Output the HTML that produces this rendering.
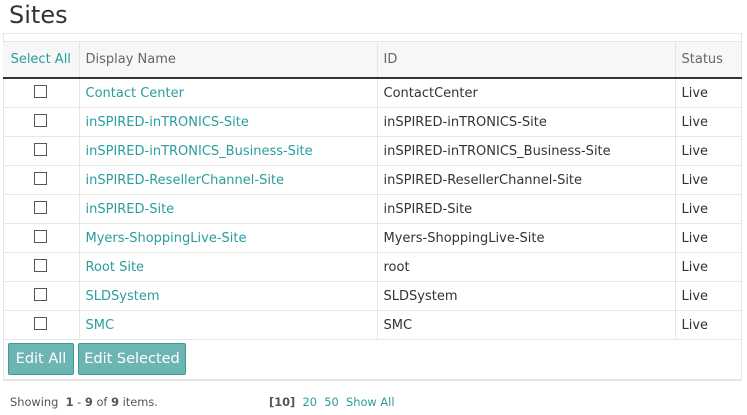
<!DOCTYPE html>
<html><head><style>
body{margin:0;width:747px;height:415px;background:#fff;font-family:"DejaVu Sans",Verdana,sans-serif;font-size:13px;color:#333;position:relative;overflow:hidden}
h1{position:absolute;left:9px;top:1px;margin:0;font-weight:normal;font-size:24px;color:#333}
.box{position:absolute;left:3px;top:33px;width:737px;height:345px;border:1px solid #e6e6e6;border-bottom:2px solid #e6e6e6}
table{position:absolute;left:3px;top:41px;border-collapse:collapse;width:739px;table-layout:fixed}
th{background:#f7f7f7;font-weight:normal;color:#666;text-align:left;height:35px;border-bottom:2px solid #333;border-right:1px solid #e6e6e6;border-top:1px solid #e6e6e6;padding:0 6px}
td{height:28px;border-bottom:1px solid #e6e6e6;border-right:1px solid #e6e6e6;padding:0 6px;white-space:nowrap}
a{color:#2a9d9d;text-decoration:none}
.cb{width:11px;height:11px;border:1px solid #555;margin:-3px auto 0}
.btn{position:absolute;top:343px;height:30px;background:#6db5b3;border:1px solid #3c9a97;border-radius:2px;color:#fff;font-size:14.5px;line-height:30px;text-align:center}
.f{position:absolute;top:395px;font-size:11.4px;color:#555}
</style></head><body>
<h1>Sites</h1>
<div class="box"></div>
<table>
<colgroup><col style="width:76px"><col style="width:298px"><col style="width:298px"><col></colgroup>
<tr><th style="text-align:center;padding:0"><a>Select All</a></th><th>Display Name</th><th>ID</th><th>Status</th></tr>
<tr><td><div class="cb"></div></td><td><a>Contact Center</a></td><td>ContactCenter</td><td>Live</td></tr>
<tr><td><div class="cb"></div></td><td><a>inSPIRED-inTRONICS-Site</a></td><td>inSPIRED-inTRONICS-Site</td><td>Live</td></tr>
<tr><td><div class="cb"></div></td><td><a>inSPIRED-inTRONICS_Business-Site</a></td><td>inSPIRED-inTRONICS_Business-Site</td><td>Live</td></tr>
<tr><td><div class="cb"></div></td><td><a>inSPIRED-ResellerChannel-Site</a></td><td>inSPIRED-ResellerChannel-Site</td><td>Live</td></tr>
<tr><td><div class="cb"></div></td><td><a>inSPIRED-Site</a></td><td>inSPIRED-Site</td><td>Live</td></tr>
<tr><td><div class="cb"></div></td><td><a>Myers-ShoppingLive-Site</a></td><td>Myers-ShoppingLive-Site</td><td>Live</td></tr>
<tr><td><div class="cb"></div></td><td><a>Root Site</a></td><td>root</td><td>Live</td></tr>
<tr><td><div class="cb"></div></td><td><a>SLDSystem</a></td><td>SLDSystem</td><td>Live</td></tr>
<tr><td><div class="cb"></div></td><td><a>SMC</a></td><td>SMC</td><td>Live</td></tr>
</table>
<div class="btn" style="left:8px;width:64px">Edit All</div>
<div class="btn" style="left:78px;width:106px">Edit Selected</div>
<div class="f" style="left:10px">Showing &nbsp;<b>1</b> - <b>9</b> of <b>9</b> items.</div>
<div class="f" style="left:269px"><b>[10]</b>&nbsp; <a>20</a>&nbsp; <a>50</a>&nbsp; <a>Show All</a></div>
</body></html>
